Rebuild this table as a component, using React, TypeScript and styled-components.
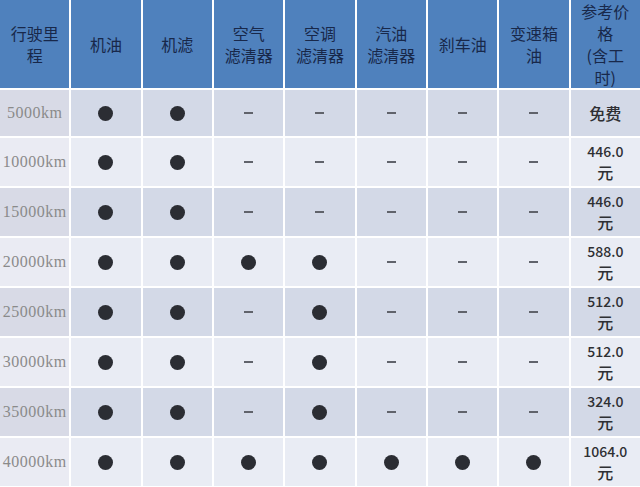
import styled, { createGlobalStyle } from "styled-components";

const GlobalStyle = createGlobalStyle`
  html, body {
    margin: 0;
    padding: 0;
    background: #ffffff;
  }
  body {
    font-family: "Noto Sans CJK SC", "Noto Sans", sans-serif;
  }
`;

const Table = styled.div`
  display: grid;
  grid-template-columns: repeat(9, 1fr);
  grid-template-rows: 88px 46px repeat(7, 48px);
  gap: 2px;
  width: 640px;
  background: #ffffff;
`;

const HeadCell = styled.div`
  display: flex;
  flex-direction: column;
  align-items: center;
  justify-content: center;
  background: #4f81bd;
  color: #18284a;
  font-size: 16px;
  line-height: 22px;
  text-align: center;
  white-space: nowrap;
`;

const Cell = styled.div<{ $dark: boolean }>`
  display: flex;
  flex-direction: column;
  align-items: center;
  justify-content: center;
  background: ${(p) => (p.$dark ? "#d3d9e7" : "#e9ecf4")};
  text-align: center;
`;

const MileCell = styled(Cell)`
  background: ${(p) => (p.$dark ? "#d8dae6" : "#eaebf3")};
`;

const Mileage = styled.span`
  font-family: "Liberation Serif", "DejaVu Serif", serif;
  font-size: 16px;
  color: #8a8a8a;
  white-space: nowrap;
  letter-spacing: 0.5px;
`;

const Dot = styled.span`
  width: 15px;
  height: 15px;
  border-radius: 50%;
  background: #2b2d33;
`;

const Dash = styled.span`
  width: 9px;
  height: 2px;
  background: #60636b;
`;

const Price = styled.span<{ $big?: boolean }>`
  font-size: ${(p) => (p.$big ? "16px" : "14px")};
  line-height: ${(p) => (p.$big ? "23px" : "20px")};
  font-weight: 500;
  color: #2e2f33;
  white-space: nowrap;
`;

const headers: string[][] = [
  ["行驶里", "程"],
  ["机油"],
  ["机滤"],
  ["空气", "滤清器"],
  ["空调", "滤清器"],
  ["汽油", "滤清器"],
  ["刹车油"],
  ["变速箱", "油"],
  ["参考价", "格", "(含工", "时)"],
];

type Row = { km: string; items: number[]; price: string };

const rows: Row[] = [
  { km: "5000km", items: [1, 1, 0, 0, 0, 0, 0], price: "免费" },
  { km: "10000km", items: [1, 1, 0, 0, 0, 0, 0], price: "446.0" },
  { km: "15000km", items: [1, 1, 0, 0, 0, 0, 0], price: "446.0" },
  { km: "20000km", items: [1, 1, 1, 1, 0, 0, 0], price: "588.0" },
  { km: "25000km", items: [1, 1, 0, 1, 0, 0, 0], price: "512.0" },
  { km: "30000km", items: [1, 1, 0, 1, 0, 0, 0], price: "512.0" },
  { km: "35000km", items: [1, 1, 0, 1, 0, 0, 0], price: "324.0" },
  { km: "40000km", items: [1, 1, 1, 1, 1, 1, 1], price: "1064.0" },
];

const App = () => {
  return (
    <>
      <GlobalStyle />
      <Table>
        {headers.map((lines, i) => (
          <HeadCell key={`h${i}`}>
            {lines.map((line) => (
              <span key={line}>{line}</span>
            ))}
          </HeadCell>
        ))}
        {rows.map((row, r) => {
          const dark = r % 2 === 0;
          return [
            <MileCell key={`${row.km}-km`} $dark={dark}>
              <Mileage>{row.km}</Mileage>
            </MileCell>,
            ...row.items.map((on, c) => (
              <Cell key={`${row.km}-${c}`} $dark={dark}>
                {on ? <Dot /> : <Dash />}
              </Cell>
            )),
            <Cell key={`${row.km}-price`} $dark={dark}>
              {row.price === "免费" ? (
                <Price $big>{row.price}</Price>
              ) : (
                <>
                  <Price>{row.price}</Price>
                  <Price $big>元</Price>
                </>
              )}
            </Cell>,
          ];
        })}
      </Table>
    </>
  );
};

export default App;
